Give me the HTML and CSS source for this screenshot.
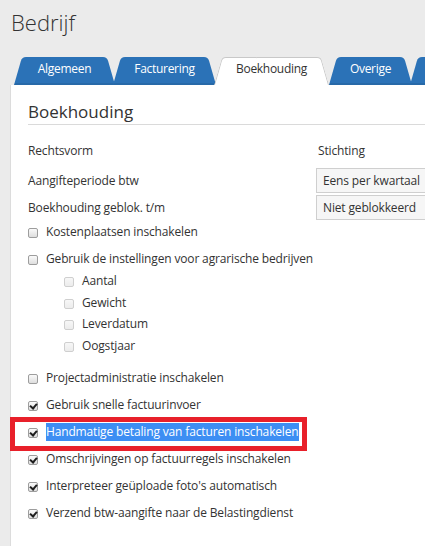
FILE: index.html
```html
<!DOCTYPE html>
<html lang="nl">
<head>
<meta charset="utf-8">
<title>Bedrijf</title>
<link rel="stylesheet" href="styles.css">
</head>
<body>
<div class="page">
  <h1 class="title">Bedrijf</h1>
  <nav class="tabs">
    <span class="tab t1">Algemeen</span>
    <span class="tab t2">Facturering</span>
    <span class="tab t3 active">Boekhouding</span>
    <span class="tab t4">Overige</span>
    <span class="tab t5"></span>
  </nav>
  <section class="panel">
    <h2 class="panel-title">Boekhouding</h2>
    <div class="rows">
      <div class="field"><span class="label">Rechtsvorm</span><span class="value">Stichting</span></div>
      <div class="field"><span class="label">Aangifteperiode btw</span><span class="select">Eens per kwartaal</span></div>
      <div class="field"><span class="label">Boekhouding geblok. t/m</span><span class="select">Niet geblokkeerd</span></div>
      <div class="check"><span class="box"></span><span>Kostenplaatsen inschakelen</span></div>
      <div class="check"><span class="box"></span><span>Gebruik de instellingen voor agrarische bedrijven</span></div>
      <div class="sub">
        <div class="check"><span class="box dis"></span><span>Aantal</span></div>
        <div class="check"><span class="box dis"></span><span>Gewicht</span></div>
        <div class="check"><span class="box dis"></span><span>Leverdatum</span></div>
        <div class="check"><span class="box dis"></span><span>Oogstjaar</span></div>
      </div>
      <div class="check"><span class="box"></span><span>Projectadministratie inschakelen</span></div>
      <div class="check"><span class="box on"></span><span>Gebruik snelle factuurinvoer</span></div>
      <div class="check marked"><span class="box on"></span><span class="selected">Handmatige betaling van facturen inschakelen</span><span class="frame"></span></div>
      <div class="check"><span class="box on"></span><span>Omschrijvingen op factuurregels inschakelen</span></div>
      <div class="check"><span class="box on"></span><span>Interpreteer geüploade foto's automatisch</span></div>
      <div class="check"><span class="box on"></span><span>Verzend btw-aangifte naar de Belastingdienst</span></div>
    </div>
  </section>
</div>
</body>
</html>
```

FILE: styles.css
```css
html, body {
  margin: 0;
  padding: 0;
  height: 100%;
  overflow: hidden;
}
body {
  background: #ebebeb;
  font-family: "Open Sans", "Noto Sans", sans-serif;
  color: #333;
}
.page {
  padding-left: 10px;
  padding-top: 7px;
  height: 100%;
  box-sizing: border-box;
  display: flex;
  flex-direction: column;
}
.title {
  margin: 0;
  font-size: 22px;
  font-weight: 300;
  line-height: 31px;
  color: #333;
  padding-left: 1px;
}
.tabs {
  display: flex;
  margin-top: 19px;
  padding-left: 4px;
  height: 28px;
  white-space: nowrap;
}
.tab {
  position: relative;
  z-index: 1;
  flex: none;
  box-sizing: border-box;
  height: 28px;
  line-height: 24px;
  text-align: center;
  font-size: 12px;
  letter-spacing: -0.3px;
  color: #fff;
  margin-left: -2px;
}
.tab::before,
.tab::after {
  content: "";
  position: absolute;
  top: 0;
  bottom: 0;
  width: 56%;
  background: #2b72b7;
  z-index: -1;
  box-shadow: inset 0 -2px 0 rgba(0, 0, 0, 0.08);
}
.tab::before {
  left: 0;
  transform-origin: bottom left;
  transform: skewX(-16deg);
  border-radius: 4px 0 0 0;
}
.tab::after {
  right: 0;
  transform-origin: bottom right;
  transform: skewX(16deg);
  border-radius: 0 4px 0 0;
}
.t1 { width: 101px; margin-left: 0; }
.t2 { width: 103px; }
.t3 { width: 115px; }
.t4 { width: 83px; margin-left: 0; }
.t5 { width: 100px; }
.tab.active {
  z-index: 2;
  color: #333;
}
.tab.active::before,
.tab.active::after {
  background: #fff;
  box-shadow: none;
  border-top: 1px solid #c8c8c8;
}
.tab.active::before { border-left: 1px solid #c8c8c8; }
.tab.active::after { border-right: 1px solid #c8c8c8; }

.panel {
  flex: 1;
  background: #fff;
  border-left: 1px solid #dcdcdc;
  padding: 17px 0 0 17px;
  font-size: 12px;
  letter-spacing: -0.15px;
}
.panel-title {
  margin: 0;
  font-size: 17px;
  font-weight: 400;
  letter-spacing: 0;
  line-height: 20px;
  padding-bottom: 2px;
  border-bottom: 1px solid #dadada;
  color: #333;
}
.rows {
  margin-top: 16px;
  display: flex;
  flex-direction: column;
  gap: 7px;
}
.field {
  display: grid;
  grid-template-columns: 290px 1fr;
  align-items: center;
  height: 20px;
  line-height: 20px;
  white-space: nowrap;
}
.select {
  margin-left: -2px;
  display: block;
  box-sizing: border-box;
  height: 25px;
  line-height: 23px;
  padding: 0 6px;
  border: 1px solid #cfcfcf;
  background: #f6f6f6;
  width: 140px;
}
.check {
  display: flex;
  align-items: center;
  height: 20px;
  line-height: 20px;
  white-space: nowrap;
  gap: 8px;
}
.box {
  flex: none;
  position: relative;
  box-sizing: border-box;
  width: 10px;
  height: 10px;
  margin-top: 2px;
  border: 1px solid #9d9d9d;
  border-radius: 2px;
  background: linear-gradient(#fafafa, #dedede);
}
.box.dis {
  border-color: #cfcfcf;
  background: linear-gradient(#f7f7f7, #ececec);
}
.box.on::after {
  content: "";
  position: absolute;
  left: 2px;
  top: 0;
  width: 3px;
  height: 5px;
  border-right: 2px solid #1e1e1e;
  border-bottom: 2px solid #1e1e1e;
  transform: rotate(40deg);
}
.sub {
  display: flex;
  flex-direction: column;
  gap: 1.7px;
  margin-top: -5px;
  margin-bottom: 4.7px;
  padding-left: 36px;
}
.marked {
  position: relative;
}
.selected {
  background: #3d8ef3;
  color: #fff;
  line-height: 18px;
}
.frame {
  position: absolute;
  left: -18px;
  top: -5px;
  width: 297px;
  height: 34px;
  box-sizing: border-box;
  border: 5px solid #e8202a;
}
```
